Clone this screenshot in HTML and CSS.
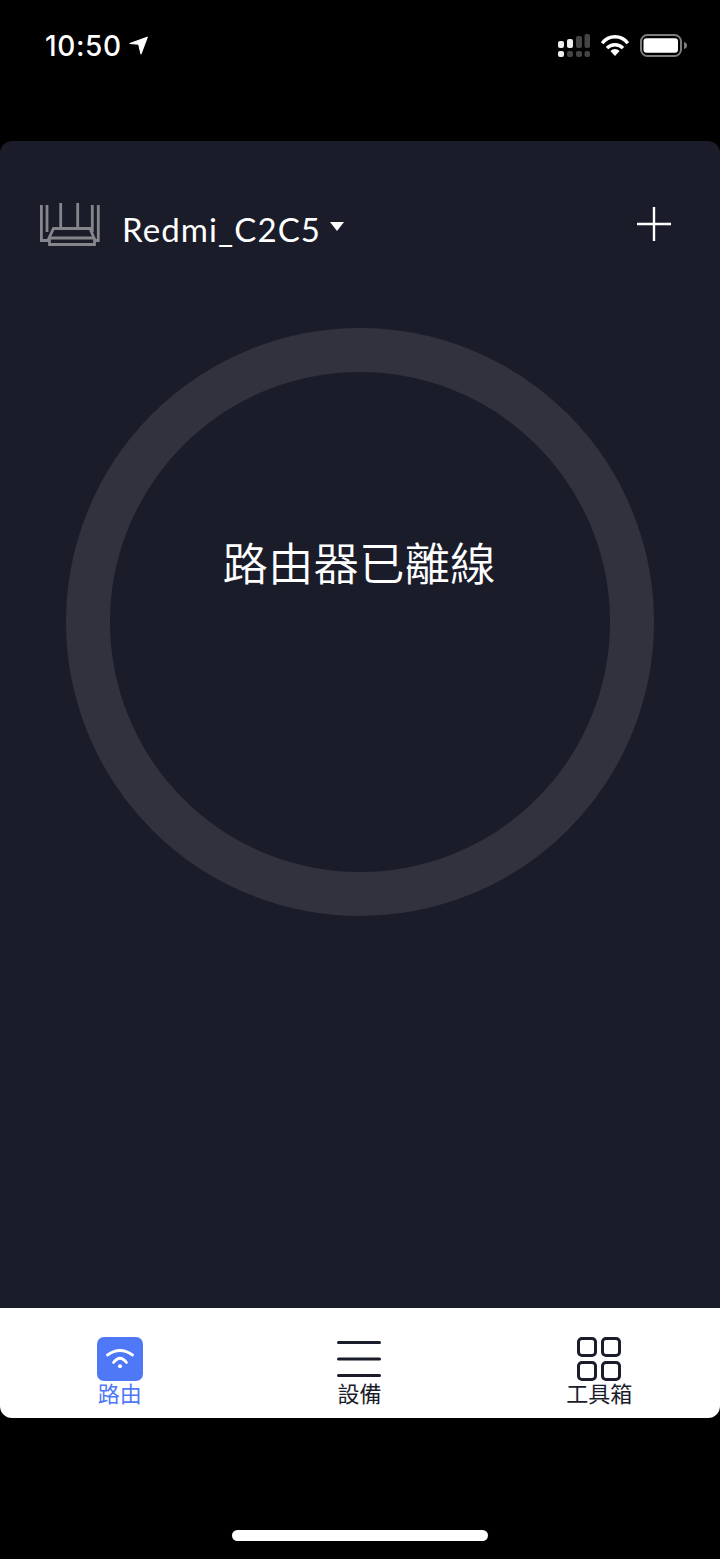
FILE: index.html
```html
<!DOCTYPE html>
<html lang="zh-Hant">
<head>
  <meta charset="utf8"/>
  <meta name="viewport" content="width=device-width"/>
  <title>路由</title>
  <link rel="stylesheet" href="styles.css">
</head>
<body>
  <div class="status-bar">
    <div class="status-left">
      <span class="time">10:50</span>
      <svg class="ico-location" width="20" height="20" viewBox="0 0 20 20"><path d="M18.200 1.200 1 7.500l8.700.6L12 17.800z" fill="#fff" stroke="#fff" stroke-width="1.200" stroke-linejoin="round"/></svg>
    </div>
    <div class="status-right">
      <svg width="32" height="23" viewBox="0 0 32 23">
        <rect x="0" y="7" width="6" height="7" rx="2" fill="#eee"/>
        <rect x="9" y="5" width="6" height="9" rx="2" fill="#eee"/>
        <rect x="18" y="2" width="6" height="12" rx="2" fill="#444"/>
        <rect x="26.500" y="0" width="5.500" height="14" rx="2" fill="#444"/>
        <rect x="0" y="17" width="6" height="6" rx="2" fill="#eee"/>
        <rect x="9" y="17" width="6" height="6" rx="2" fill="#444"/>
        <rect x="18" y="17" width="6" height="6" rx="2" fill="#444"/>
        <rect x="26.500" y="17" width="5.500" height="6" rx="2" fill="#444"/>
      </svg>
      <svg width="30" height="22" viewBox="0 0 30 22">
        <path d="M2.200 9.200a16 16 0 0 1 25.600 0M7 14.200a11 11 0 0 1 16 0" fill="none" stroke="#fff" stroke-width="3.400"/>
        <path d="M15 22 10.400 17a6.500 6.500 0 0 1 9.200 0z" fill="#fff"/>
      </svg>
      <svg width="47" height="23" viewBox="0 0 47 23">
        <rect x="1" y="1" width="40" height="21" rx="6.500" fill="none" stroke="#7c7c7c" stroke-width="2"/>
        <rect x="3.500" y="4.300" width="34.500" height="14.500" rx="3" fill="#fff"/>
        <path d="M44 8c2 .5 3 1.800 3 3.500s-1 3-3 3.500z" fill="#7c7c7c"/>
      </svg>
    </div>
  </div>

  <div class="app">
    <div class="main">
      <div class="top-row">
        <div class="router-info">
          <svg width="60" height="44" viewBox="0 0 60 44" fill="none" stroke="#85868c" stroke-width="2.800">
            <path d="M1.400 2v35.500h8M7 2v27M20.700 0v25.500M37.700 0v25.500M52.300 2v27M58.300 2v35.500h-4"/>
            <path d="M13.500 25.500H50L54 35H9zM9.500 35v6.500h45V35"/>
          </svg>
          <span class="router-name">Redmi_C2C5</span>
          <span class="caret"></span>
        </div>
        <svg class="ico-plus" width="36" height="36" viewBox="0 0 36 36"><path d="M18 1v34M1 18h34" stroke="#fff" stroke-width="2.400"/></svg>
      </div>
      <div class="ring">
        <span class="ring-text">路由器已離線</span>
      </div>
    </div>

    <div class="tabs">
      <div class="tab tab-active">
        <div class="wifi-tile">
          <svg width="28" height="22" viewBox="0 0 28 22" fill="none" stroke="#fff" stroke-width="2.800" stroke-linecap="round">
            <path d="M1.500 7Q14-2 26.500 7M7.500 14.500Q14 6 20.500 14.500"/>
            <circle cx="14" cy="18.300" r="2" fill="#fff" stroke="none"/>
          </svg>
        </div>
        <span class="tab-label">路由</span>
      </div>
      <div class="tab">
        <svg width="44" height="44" viewBox="0 0 44 44" stroke="#1a1c2a" stroke-width="3" stroke-linecap="round">
          <path d="M1.500 5.500h41M1.500 22h41M1.500 38.500h41"/>
        </svg>
        <span class="tab-label">設備</span>
      </div>
      <div class="tab">
        <svg width="44" height="44" viewBox="0 0 44 44" fill="none" stroke="#1a1c2a" stroke-width="3">
          <rect x="1.500" y="1.500" width="17" height="17" rx="3.500"/>
          <rect x="25.500" y="1.500" width="17" height="17" rx="3.500"/>
          <rect x="1.500" y="25.500" width="17" height="17" rx="3.500"/>
          <rect x="25.500" y="25.500" width="17" height="17" rx="3.500"/>
        </svg>
        <span class="tab-label">工具箱</span>
      </div>
    </div>
  </div>

  <div class="home-area"><div class="home-indicator"></div></div>
</body>
</html>
```

FILE: styles.css
```css
html, body { margin: 0; padding: 0; background: #000; }
body {
  width: 720px; height: 1559px; overflow: hidden;
  display: flex; flex-direction: column;
  font-family: Lato, "Noto Sans CJK TC", sans-serif;
}

.status-bar { height: 141px; box-sizing: border-box; padding: 28px 33px 0 45px; display: flex; justify-content: space-between; align-items: flex-start; flex-shrink: 0; }
.status-left { display: flex; align-items: center; gap: 7px; height: 36px; }
.time { color: #fff; font-family: Inter, sans-serif; font-size: 28px; font-weight: 500; letter-spacing: 0.6px; }
.ico-location { margin-top: -1px; }
.status-right { display: flex; align-items: flex-start; gap: 10px; padding-top: 6px; }

.app { height: 1277px; border-radius: 12px; overflow: hidden; display: flex; flex-direction: column; background: #1a1c2a; flex-shrink: 0; }
.main { flex: 1; }

.top-row { display: flex; justify-content: space-between; align-items: flex-start; padding: 62px 48px 0 40px; height: 125px; box-sizing: border-box; }
.router-info { display: flex; align-items: center; height: 44px; }
.router-name { color: #fff; font-size: 33px; letter-spacing: 1.1px; margin-left: 22px; margin-top: 8px; line-height: 44px; }
.caret { width: 0; height: 0; margin-left: 9px; margin-top: 3px; border-left: 7px solid transparent; border-right: 7px solid transparent; border-top: 9px solid #fff; }
.ico-plus { margin-top: 3px; }

.ring {
  width: 588px; height: 588px; box-sizing: border-box;
  margin: 62px auto 0; padding-bottom: 122px;
  border: 44px solid #31323e; border-radius: 50%;
  display: flex; align-items: center; justify-content: center;
}
.ring-text { color: #fff; font-family: "Noto Sans CJK TC", sans-serif; font-size: 45.500px; font-weight: 350; line-height: 60px; margin-left: -2px; }

.tabs { height: 110px; box-sizing: border-box; padding-right: 1px; background: #fff; display: grid; grid-template-columns: 1fr 1fr 1fr; flex-shrink: 0; }
.tab { display: flex; flex-direction: column; align-items: center; padding-top: 29px; }
.tab-label { font-family: "Noto Sans CJK TC", sans-serif; font-size: 22px; line-height: 24px; margin-top: -1px; color: #1a1c2a; }
.tab-active .tab-label { color: #4f78f6; }
.wifi-tile { width: 46px; height: 44px; border-radius: 7px; background: #4f78f6; display: flex; align-items: center; justify-content: center; }

.home-area { flex: 1; display: flex; justify-content: center; padding-top: 112px; }
.home-indicator { width: 256px; height: 11px; border-radius: 6px; background: #fff; }
```
